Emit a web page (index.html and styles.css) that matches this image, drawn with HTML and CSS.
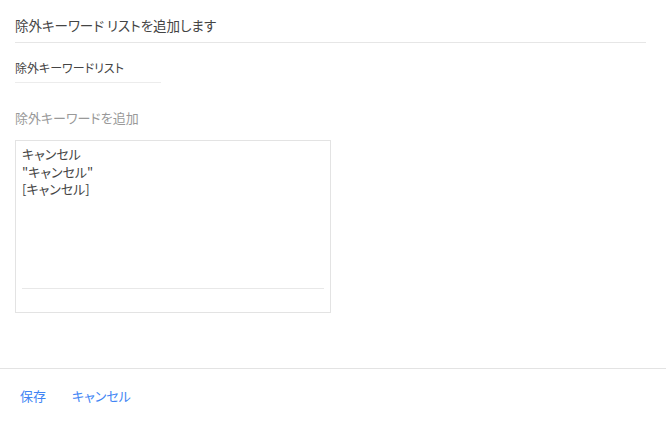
FILE: index.html
```html
<!doctype html>
<html>
  <head>
    <meta charset="utf-8">
    <title>除外キーワード リストを追加します</title>
    <link rel="stylesheet" href="styles.css">
  </head>
  <body>
    <div class="dialog">
      <div class="dialog-title">除外キーワード リストを追加します</div>

      <div class="dialog-body">
        <div class="list-name">除外キーワードリスト</div>
        <div class="add-label">除外キーワードを追加</div>
        <div class="keywords-box">
          <div class="keywords">
            <div>キャンセル</div>
            <div>"キャンセル"</div>
            <div>[キャンセル]</div>
          </div>
          <div class="keywords-rule"></div>
        </div>
      </div>

      <div class="dialog-footer">
        <a href="#" class="action">保存</a>
        <a href="#" class="action">キャンセル</a>
      </div>
    </div>
  </body>
</html>
```

FILE: styles.css
```css
body
{margin:0;
background:#fff;
color:#444;
font-family:"Noto Sans CJK JP","Noto Sans",sans-serif;
font-feature-settings:"palt";}

.dialog{display:flex;flex-direction:column;}

.dialog-title
{margin:0 20px 0 15px;
padding:16px 0 8px 0;
line-height:18px;
font-size:13.5px;
border-bottom:1px solid #e6e6e6;}

.dialog-body{display:flex;flex-direction:column;align-items:flex-start;padding:0 0 0 15px;}

.list-name
{margin-top:16px;
width:146px;
padding-bottom:5px;
line-height:18px;
font-size:12px;
border-bottom:1px solid #ececec;}

.add-label
{margin-top:26px;
line-height:18px;
font-size:13px;
color:#999;}

.keywords-box
{margin-top:13px;
width:302px;
height:167px;
padding:4px 6px 0 6px;
border:1px solid #e3e3e3;
display:flex;
flex-direction:column;}

.keywords{font-size:13px;line-height:17.5px;height:143px;}
.keywords-rule{border-top:1px solid #e8e8e8;}

.dialog-footer
{margin-top:55px;
padding:18px 0 0 20px;
border-top:1px solid #e3e3e3;
display:flex;
gap:26px;}

.action
{line-height:18px;
font-size:13px;
color:#4285f4;
text-decoration:none;}
```
